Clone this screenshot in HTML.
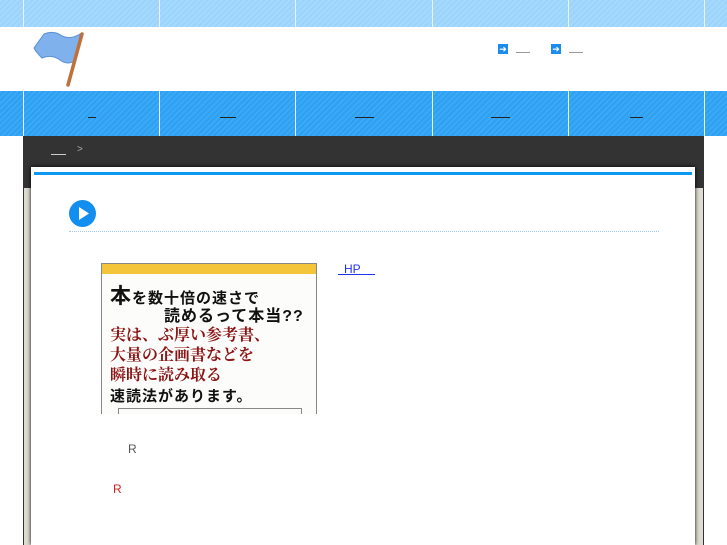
<!DOCTYPE html><html><head><meta charset="utf-8"><style>
body{margin:0;width:727px;height:545px;overflow:hidden;background:#fff;font-family:"Liberation Sans","Noto Sans CJK JP",sans-serif;position:relative}
.a{position:absolute}
.stripe1{background:repeating-linear-gradient(135deg,#a6dafc 0 2px,#9bd3fa 2px 4px)}
.stripe2{background:repeating-linear-gradient(135deg,#3aa9f6 0 2px,#2f9ff0 2px 4px)}
.v{position:absolute;width:1px;background:#e8f4fd}
.u{position:absolute;height:1px;background:#222}
</style></head><body>
<div class="a stripe1" style="left:0;top:0;width:727px;height:27px"></div>
<div class="a stripe2" style="left:0;top:91px;width:727px;height:45px"></div>
<div class="v" style="left:23px;top:0;height:27px"></div><div class="v" style="left:159px;top:0;height:27px"></div><div class="v" style="left:295px;top:0;height:27px"></div><div class="v" style="left:432px;top:0;height:27px"></div><div class="v" style="left:568px;top:0;height:27px"></div><div class="v" style="left:704px;top:0;height:27px"></div>
<div class="v" style="left:23px;top:91px;height:45px"></div><div class="v" style="left:159px;top:91px;height:45px"></div><div class="v" style="left:295px;top:91px;height:45px"></div><div class="v" style="left:432px;top:91px;height:45px"></div><div class="v" style="left:568px;top:91px;height:45px"></div><div class="v" style="left:704px;top:91px;height:45px"></div>
<div class="u" style="left:88px;top:117px;width:8px"></div><div class="u" style="left:220px;top:117px;width:16px"></div><div class="u" style="left:355px;top:117px;width:19px"></div><div class="u" style="left:491px;top:117px;width:19px"></div><div class="u" style="left:630px;top:117px;width:13px"></div>
<svg class="a" style="left:32px;top:30px" width="56" height="58"><path d="M12 4 Q22 0 30 6 Q38 10 48 4 L44 30 Q36 36 28 30 Q20 24 10 28 Q4 22 2 18 Z" fill="#7fb1ec" stroke="#5b8fd6"/><path d="M50 4 L36 55" stroke="#c0703a" stroke-width="3.5" stroke-linecap="round"/></svg>
<div class="a" style="left:498px;top:44px;width:10px;height:10px;background:#1a8cf0;color:#fff;font-size:9px;line-height:10px;text-align:center">➜</div>
<div class="a" style="left:516px;top:52px;width:14px;height:1px;background:#999"></div>
<div class="a" style="left:551px;top:44px;width:10px;height:10px;background:#1a8cf0;color:#fff;font-size:9px;line-height:10px;text-align:center">➜</div>
<div class="a" style="left:569px;top:52px;width:14px;height:1px;background:#999"></div>
<div class="a" style="left:23px;top:136px;width:681px;height:409px;background:#333"></div>
<div class="a" style="left:51px;top:154px;width:15px;height:1px;background:#ccc"></div>
<div class="a" style="left:77px;top:144px;color:#aaa;font-size:10px">&gt;</div>
<div class="a" style="left:24px;top:188px;width:679px;height:357px;background:#dedbd2"></div>
<div class="a" style="left:31px;top:167px;width:664px;height:378px;background:#fff;box-shadow:0 0 4px #000"></div>
<div class="a" style="left:34px;top:172px;width:658px;height:3px;background:#0d98f2"></div>
<div class="a" style="left:69px;top:200px;width:27px;height:27px;border-radius:50%;background:#118ef0"></div>
<svg class="a" style="left:69px;top:200px" width="27" height="27"><path d="M10 7 L20 13.5 L10 20 Z" fill="#fff"/></svg>
<div class="a" style="left:69px;top:231px;width:590px;border-top:1px dotted #9fc9ee"></div>
<div class="a" style="left:101px;top:263px;width:214px;height:150px;border:1px solid #888;border-bottom:none;background:#fcfcfa;overflow:hidden">
<div style="height:10px;background:#f4c43a"></div>
<div style="position:absolute;left:8px;top:16px;font-size:21px;font-weight:bold;color:#111;white-space:nowrap;letter-spacing:1px">本<span style="font-size:15px">を数十倍の速さで</span></div>
<div style="position:absolute;left:62px;top:38px;font-size:16px;font-weight:bold;color:#111;white-space:nowrap;letter-spacing:1px">読めるって本当??</div>
<div style="position:absolute;left:8px;top:60px;font-size:16px;line-height:20px;font-weight:bold;color:#8b1414;font-family:'Noto Serif CJK SC',serif;white-space:nowrap">実は、ぶ厚い参考書、<br>大量の企画書などを<br>瞬時に読み取る</div>
<div style="position:absolute;left:8px;top:121px;font-size:15px;font-weight:bold;color:#111;white-space:nowrap;letter-spacing:1px">速読法があります。</div>
<div style="position:absolute;left:16px;top:144px;width:182px;height:10px;border:1px solid #888"></div>
</div>
<div class="a" style="left:344px;top:262px;font-size:12px;color:#2233ee">HP</div>
<div class="a" style="left:338px;top:274px;width:37px;height:1px;background:#2233ee"></div>
<div class="a" style="left:128px;top:442px;font-size:12px;color:#555">R</div>
<div class="a" style="left:113px;top:482px;font-size:12px;color:#d02020">R</div>
</body></html>
